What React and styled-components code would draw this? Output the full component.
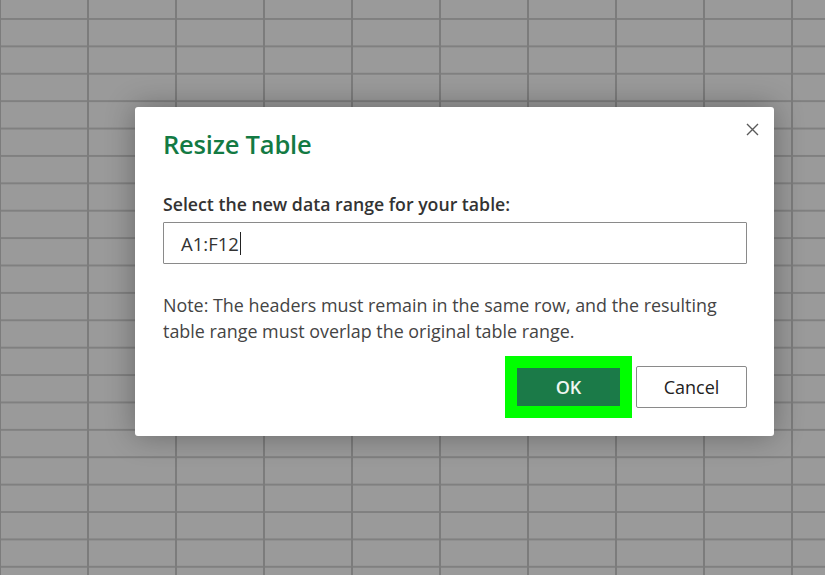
import React from "react";
import styled, { createGlobalStyle } from "styled-components";

const GlobalStyle = createGlobalStyle`
  html, body {
    margin: 0;
    padding: 0;
    width: 100%;
    height: 100%;
    overflow: hidden;
  }
  body {
    font-family: "Open Sans", "Noto Sans", sans-serif;
  }
`;

export default function App() {
  return (
    <>
      <GlobalStyle />
      <Sheet>
        <Dialog>
          <CloseButton aria-label="Close">
            <svg width="13" height="13" viewBox="0 0 13 13">
              <path d="M1 1L12 12M12 1L1 12" stroke="#5a5a5a" strokeWidth="1.4" fill="none" />
            </svg>
          </CloseButton>
          <Title>Resize Table</Title>
          <Label>Select the new data range for your table:</Label>
          <RangeInput>
            A1:F12<Caret />
          </RangeInput>
          <Note>
            Note: The headers must remain in the same row, and the resulting
            <br />
            table range must overlap the original table range.
          </Note>
          <Actions>
            <Button primary>OK</Button>
            <Button>Cancel</Button>
          </Actions>
        </Dialog>
      </Sheet>
    </>
  );
}

const Sheet = styled.div`
  width: 825px;
  height: 575px;
  box-sizing: border-box;
  padding: 107px 0 0 135px;
  background-color: #9a9a9a;
  background-image:
    linear-gradient(to right, #7c7c7c 0 2px, transparent 2px),
    linear-gradient(to bottom, #808080 0 2px, transparent 2px);
  background-size: 88px 27.4px;
  background-position: -1px 18px;
`;

const Dialog = styled.div`
  position: relative;
  width: 639px;
  height: 329px;
  box-sizing: border-box;
  padding: 19px 27px 0 28px;
  background: #ffffff;
  border-radius: 3px;
  box-shadow: 0 0 30px rgba(0, 0, 0, 0.32);
  display: flex;
  flex-direction: column;
`;

const CloseButton = styled.div`
  position: absolute;
  top: 16px;
  right: 15px;
  width: 13px;
  height: 13px;
  display: flex;
`;

const Title = styled.h1`
  margin: 0;
  font-size: 25.5px;
  line-height: 36px;
  font-weight: 600;
  color: #137a43;
  letter-spacing: -0.2px;
`;

const Label = styled.div`
  margin-top: 30px;
  font-size: 17.7px;
  line-height: 24px;
  font-weight: 600;
  color: #333333;
`;

const RangeInput = styled.div`
  margin-top: 6px;
  height: 42px;
  box-sizing: border-box;
  border: 1px solid #8a8a8a;
  border-radius: 1px;
  padding: 0 0 0 17px;
  display: flex;
  align-items: center;
  font-size: 18.5px;
  color: #333333;
`;

const Caret = styled.span`
  display: inline-block;
  width: 1px;
  height: 23px;
  margin-left: 1px;
  background: #222222;
`;

const Note = styled.p`
  margin: 28px 0 0;
  font-size: 17.9px;
  line-height: 26px;
  color: #444444;
  white-space: nowrap;
`;

const Actions = styled.div`
  margin-top: 22px;
  display: flex;
  justify-content: flex-end;
  align-items: center;
  gap: 16px;
`;

const Button = styled.div`
  box-sizing: border-box;
  width: ${(p) => (p.primary ? "103px" : "111px")};
  height: ${(p) => (p.primary ? "38px" : "42px")};
  display: flex;
  align-items: center;
  justify-content: center;
  font-size: 18px;
  font-weight: ${(p) => (p.primary ? 600 : 400)};
  color: ${(p) => (p.primary ? "#eef6f1" : "#222222")};
  background: ${(p) => (p.primary ? "#1b7a48" : "#ffffff")};
  border: ${(p) => (p.primary ? "none" : "1px solid #8a8a8a")};
  border-radius: ${(p) => (p.primary ? "0" : "2px")};
  outline: ${(p) => (p.primary ? "12px solid #00ff00" : "none")};
`;
